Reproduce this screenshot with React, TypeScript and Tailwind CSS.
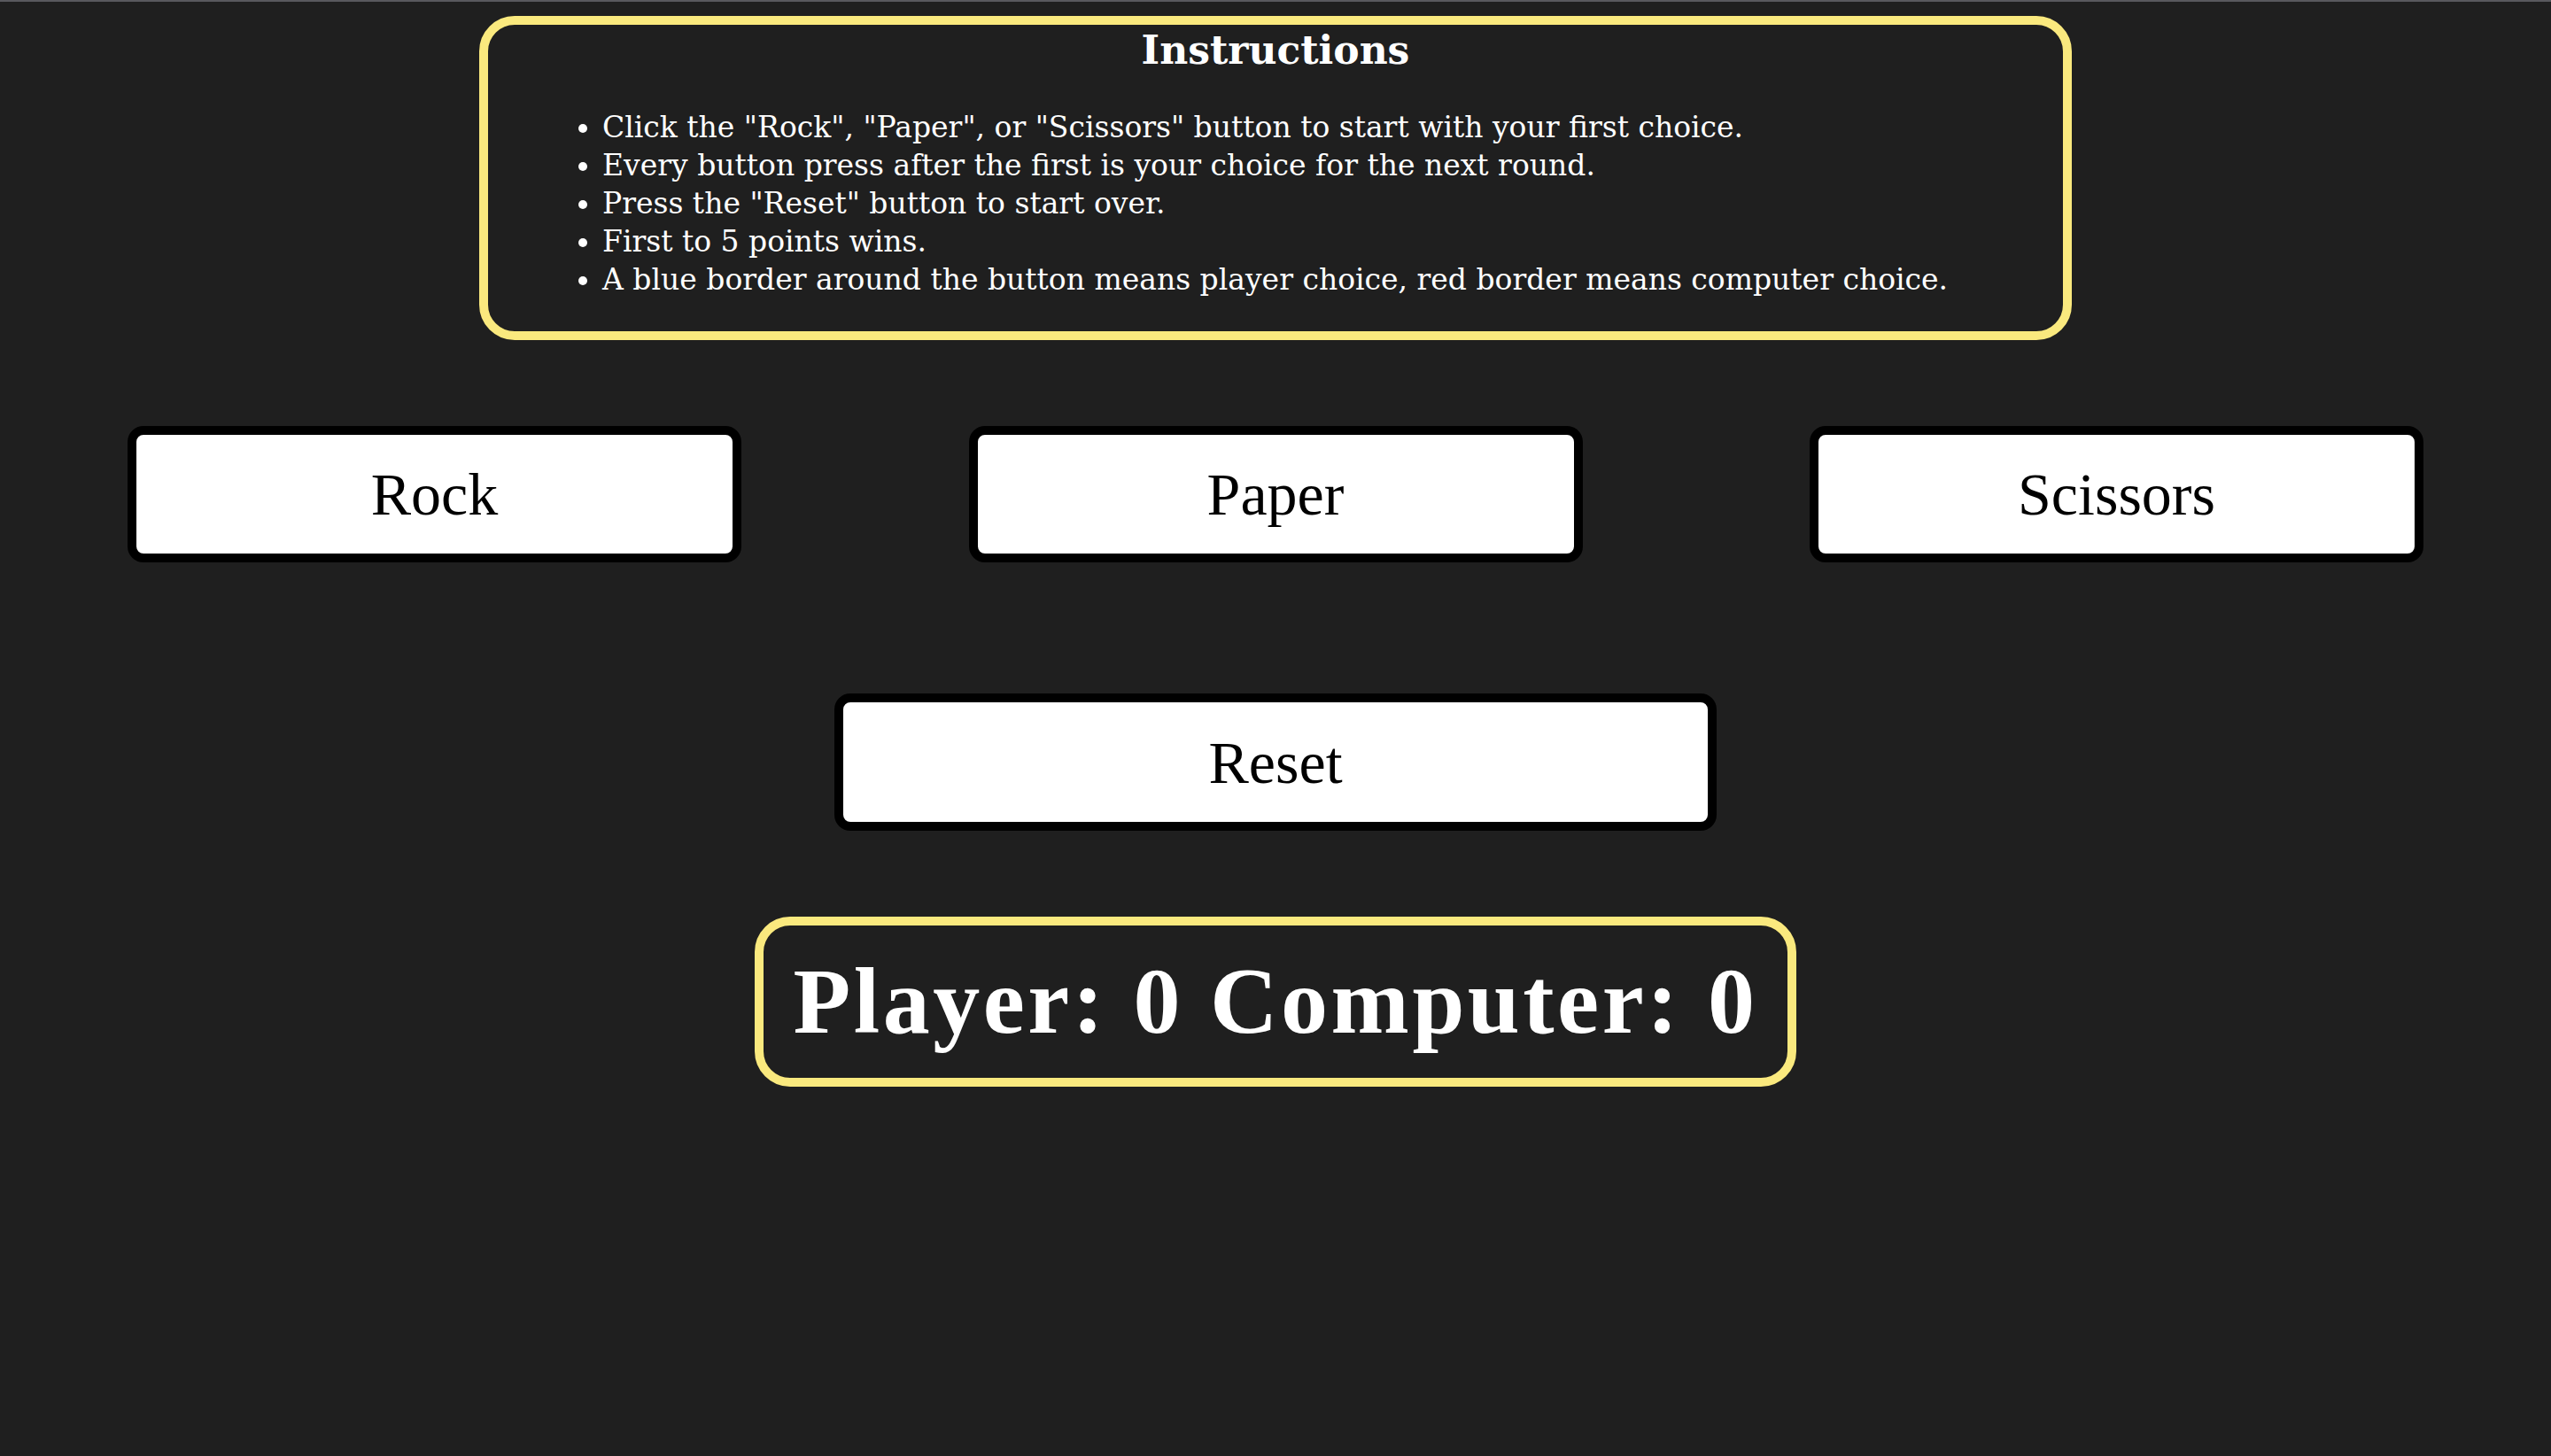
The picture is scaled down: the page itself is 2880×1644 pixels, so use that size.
import React from 'react'

const rules = [
  'Click the "Rock", "Paper", or "Scissors" button to start with your first choice.',
  'Every button press after the first is your choice for the next round.',
  'Press the "Reset" button to start over.',
  'First to 5 points wins.',
  'A blue border around the button means player choice, red border means computer choice.',
]

function ChoiceButton({ label, className = '' }: { label: string; className?: string }) {
  return (
    <button
      className={`h-[154px] bg-white border-[10px] border-black rounded-[18px] text-black text-[68px] leading-none ${className}`}
    >
      {label}
    </button>
  )
}

export default function App() {
  return (
    <div className="min-h-screen bg-[#1f1f1f] font-['Liberation_Serif',serif]">
      <div className="h-[2px] bg-[#58585d]" />

      <div className="mx-auto mt-[16px] w-[1798px] h-[366px] border-[10px] border-[#fae97e] rounded-[40px] text-white font-['DejaVu_Serif',serif]">
        <h2 className="pt-[4px] text-center text-[44px] font-bold leading-[1.15]">Instructions</h2>
        <ul className="mt-[39px] pl-[129px] list-disc text-[33px] leading-[43px]">
          {rules.map((r) => (
            <li key={r}>{r}</li>
          ))}
        </ul>
      </div>

      <div className="mt-[97px] flex justify-between px-[144px]">
        <ChoiceButton label="Rock" className="w-[693px]" />
        <ChoiceButton label="Paper" className="w-[693px]" />
        <ChoiceButton label="Scissors" className="w-[693px]" />
      </div>

      <div className="mt-[148px] flex justify-center">
        <ChoiceButton label="Reset" className="w-[996px] h-[155px]" />
      </div>

      <div className="mt-[97px] mx-auto w-[1176px] h-[192px] flex items-center justify-center border-[10px] border-[#fae97e] rounded-[40px] text-white">
        <span className="text-[106px] font-bold leading-none tracking-[3.5px]">Player: 0 Computer: 0</span>
      </div>
    </div>
  )
}
